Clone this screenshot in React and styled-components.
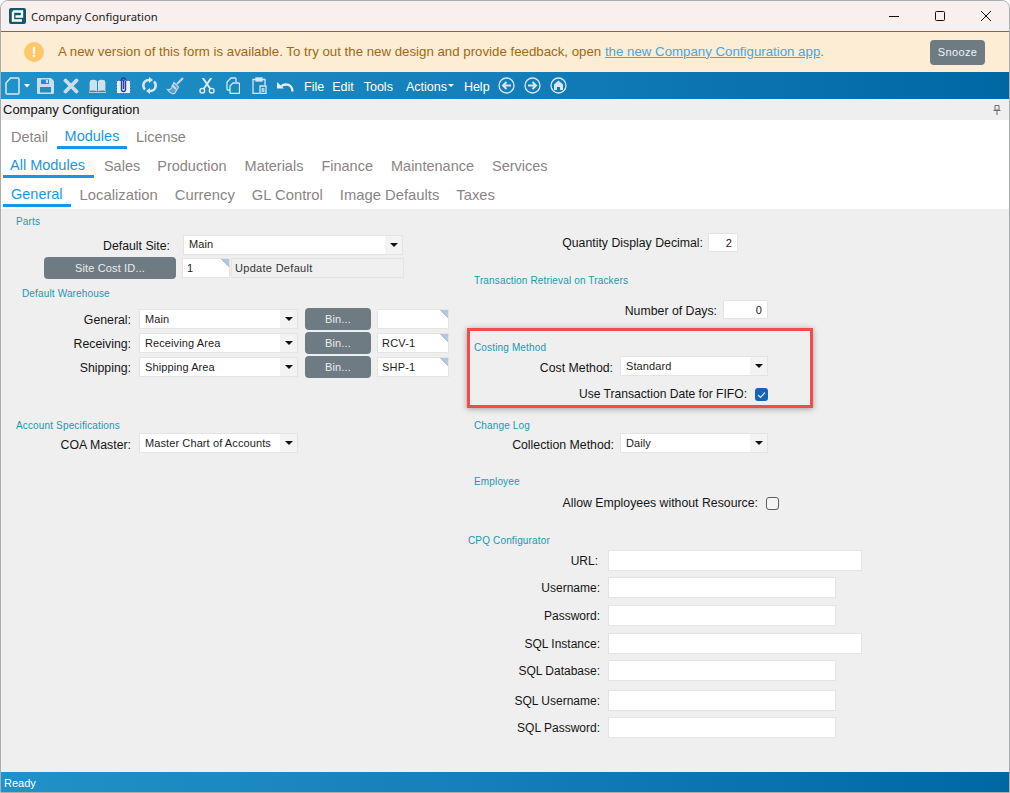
import React from "react";
import styled, { createGlobalStyle } from "styled-components";

const GlobalStyle = createGlobalStyle`
  html, body {
    margin: 0;
    padding: 0;
    background: #ffffff;
  }
  * {
    box-sizing: border-box;
  }
`;

const Window = styled.div`
  width: 1010px;
  height: 793px;
  display: flex;
  flex-direction: column;
  overflow: hidden;
  border: 1px solid #a9aeb1;
  border-radius: 8px 8px 0 0;
  font-family: "Liberation Sans", Arial, sans-serif;
  background: #efefef;
`;

const TitleBar = styled.div`
  height: 31px;
  flex: none;
  display: flex;
  align-items: center;
  padding-left: 8px;
  background: #f8efee;
  border-bottom: 1px solid #2a7fb5;
`;

const TitleText = styled.span`
  margin-left: 5px;
  font-family: "Noto Sans", sans-serif;
  font-size: 11.3px;
  color: #1a1a1a;
`;

const WindowControls = styled.div`
  margin-left: auto;
  display: flex;
  color: #111111;
`;

const WindowControl = styled.div`
  width: 46px;
  height: 30px;
  display: flex;
  align-items: center;
  justify-content: center;
`;

const Banner = styled.div`
  height: 40px;
  flex: none;
  display: flex;
  align-items: center;
  padding: 0 24px 0 23px;
  background: #fcedd4;
`;

const WarnDot = styled.div`
  width: 20px;
  height: 20px;
  border-radius: 50%;
  background: #fdc76a;
  color: #ffffff;
  font-size: 14px;
  font-weight: 700;
  display: flex;
  align-items: center;
  justify-content: center;
`;

const BannerText = styled.div`
  margin-left: 14px;
  padding-bottom: 2px;
  font-size: 13.27px;
  color: #a1690f;
`;

const BannerLink = styled.a`
  color: #4aa5e0;
  text-decoration: underline;
`;

const SnoozeButton = styled.div`
  margin-left: auto;
  width: 55px;
  height: 25px;
  border-radius: 4px;
  background: #6f7b82;
  color: #f0f3f4;
  font-size: 11px;
  letter-spacing: 0.4px;
  display: flex;
  align-items: center;
  justify-content: center;
`;

const Toolbar = styled.div`
  height: 27px;
  flex: none;
  display: flex;
  align-items: center;
  padding-left: 3px;
  color: #d7e7f2;
  background: linear-gradient(90deg, #2092c8 0%, #1580bb 45%, #0067a5 100%);
`;

const ToolSlot = styled.div`
  width: ${(p) => p.$w || 26}px;
  margin-left: ${(p) => p.$ml || 0}px;
  height: 18px;
  flex: none;
  display: flex;
  align-items: center;
  justify-content: center;
`;

const Menu = styled.span`
  margin-left: ${(p) => p.$ml}px;
  padding-top: 2px;
  color: #ffffff;
  font-size: 12.5px;
  display: flex;
  align-items: center;
`;

const Caret = styled.span`
  width: 0;
  height: 0;
  margin-left: 1px;
  margin-bottom: 3px;
  border-left: 3px solid transparent;
  border-right: 3px solid transparent;
  border-top: 3px solid #ffffff;
`;

const HeaderBand = styled.div`
  height: 21px;
  flex: none;
  display: flex;
  align-items: center;
  justify-content: space-between;
  padding: 0 8px 0 2px;
  font-size: 13px;
  color: #111111;
  background: #efefef;
`;

const TabsPanel = styled.div`
  flex: none;
  height: 89px;
  background: #ffffff;
`;

const TabRow = styled.div`
  display: flex;
  height: 29px;
  padding-left: ${(p) => p.$pl || 2}px;
  gap: ${(p) => p.$gap || 0}px;
`;

const Tab = styled.div`
  height: 29px;
  padding: ${(p) => (p.$active ? 6 : 8)}px ${(p) => p.$pr || 8}px 0 ${(p) => p.$pl || 8}px;
  font-size: ${(p) => p.$size || 14.5}px;
  line-height: ${(p) => (p.$active ? 20 : 18)}px;
  white-space: nowrap;
  color: ${(p) => (p.$active ? "#1a96e8" : "#8a8583")};
  border-bottom: 3px solid ${(p) => (p.$active ? "#1a96e8" : "transparent")};
`;

const FormArea = styled.div`
  flex: 1;
  display: flex;
  background: #efefef;
`;

const LeftColumn = styled.div`
  width: 459px;
  flex: none;
`;

const RightColumn = styled.div`
  flex: 1;
`;

const Caption = styled.div`
  height: 12px;
  line-height: 14px;
  margin-top: ${(p) => p.$top}px;
  margin-left: ${(p) => p.$left}px;
  font-size: 10px;
  letter-spacing: 0.15px;
  color: #1b97b4;
  white-space: nowrap;
`;

const Row = styled.div`
  display: flex;
  align-items: center;
  height: ${(p) => p.$h || 20}px;
  margin-top: ${(p) => p.$top}px;
`;

const Label = styled.div`
  width: ${(p) => p.$w}px;
  margin-right: ${(p) => p.$gap}px;
  padding: ${(p) => p.$pt ?? 1}px 0 ${(p) => p.$pb || 0}px;
  flex: none;
  text-align: right;
  font-size: ${(p) => p.$size || 12.3}px;
  color: #151515;
  white-space: nowrap;
`;

const SelectBox = styled.div`
  width: ${(p) => p.$w}px;
  height: 20px;
  flex: none;
  display: flex;
  background: #ffffff;
  border: 1px solid #e4e4e4;
`;

const SelectValue = styled.div`
  flex: 1;
  padding-left: 5px;
  font-size: 11px;
  letter-spacing: 0.1px;
  line-height: ${(p) => p.$lh || 19}px;
  color: #1c1c1c;
  white-space: nowrap;
`;

const SelectArrow = styled.div`
  width: 17px;
  display: flex;
  align-items: center;
  justify-content: center;
  background: #f3f3f3;
  &::before {
    content: "";
    width: 0;
    height: 0;
    border-left: 4px solid transparent;
    border-right: 4px solid transparent;
    border-top: 4px solid #111111;
  }
`;

const GreyButton = styled.div`
  width: ${(p) => p.$w}px;
  height: 22px;
  margin-left: ${(p) => p.$ml || 0}px;
  flex: none;
  border-radius: 4px;
  background: #6f7b82;
  color: #e9edef;
  font-size: 11px;
  letter-spacing: 0.15px;
  display: flex;
  align-items: center;
  justify-content: center;
`;

const TextBox = styled.div`
  width: ${(p) => p.$w}px;
  height: ${(p) => p.$h || 20}px;
  margin-left: ${(p) => p.$ml || 0}px;
  flex: none;
  padding: 0 5px 0 4px;
  font-size: 11px;
  letter-spacing: 0.2px;
  line-height: ${(p) => (p.$h || 20) - 1}px;
  text-align: ${(p) => (p.$num ? "right" : "left")};
  color: #1c1c1c;
  background: ${(p) =>
    p.$fold
      ? "linear-gradient(225deg, #b3c6e0 6px, transparent 6px), #ffffff"
      : "#ffffff"};
  border: 1px solid #e4e4e4;
`;

const ReadOnlyBox = styled.div`
  width: 173px;
  height: 20px;
  flex: none;
  margin-left: 1px;
  padding-left: 3px;
  font-size: 11px;
  letter-spacing: 0.3px;
  line-height: 18px;
  color: #333333;
  background: #f0f0f0;
  border: 1px solid #e4e4e4;
`;

const CheckOn = styled.div`
  width: 13px;
  height: 13px;
  flex: none;
  border-radius: 3px;
  background: #1464b4;
  display: flex;
  align-items: center;
  justify-content: center;
`;

const CheckOff = styled.div`
  width: 13px;
  height: 13px;
  flex: none;
  border-radius: 3px;
  border: 1px solid #5f5f5f;
  background: #f5f5f5;
`;

const Highlight = styled.div`
  width: 346px;
  height: 80px;
  margin: 9px 0 0 7px;
  padding: 0 0 0 4px;
  border: 3px solid #f44a4a;
  box-shadow: 0 1px 6px rgba(0, 0, 0, 0.35);
`;

const StatusBar = styled.div`
  height: 20px;
  flex: none;
  display: flex;
  align-items: center;
  padding: 2px 0 0 3px;
  font-size: 11px;
  color: #ffffff;
  background: linear-gradient(90deg, #2092c8 0%, #1580bb 45%, #0067a5 100%);
`;

const Logo = () => (
  <svg width="17" height="16" viewBox="0 0 17 16">
    <rect x="0" y="0" width="17" height="16" rx="2" fill="#10586c" />
    <path d="M4 3.5h9v5H6.5M4 3.5v9h9" fill="none" stroke="#ffffff" strokeWidth="2.4" />
  </svg>
);

const NewIcon = () => (
  <svg width="15" height="18" viewBox="0 0 15 18" fill="none" stroke="currentColor" strokeWidth="1.5">
    <path d="M5.5 1H13a1 1 0 0 1 1 1v14a1 1 0 0 1-1 1H2a1 1 0 0 1-1-1V6z" />
  </svg>
);

const SmallCaret = () => (
  <svg width="6" height="4" viewBox="0 0 6 4">
    <path d="M0 0h6L3 3.5z" fill="#ffffff" />
  </svg>
);

const SaveIcon = () => (
  <svg width="17" height="16" viewBox="0 0 17 16">
    <path
      fillRule="evenodd"
      d="M1 0h13l3 3v12a1 1 0 0 1-1 1H1a1 1 0 0 1-1-1V1a1 1 0 0 1 1-1zM4 1.5V6h8V1.5zM3 9v5.5h11V9z"
      fill="#c9deee"
    />
    <rect x="9" y="2" width="2" height="3" fill="#c9deee" />
  </svg>
);

const CloseIcon = () => (
  <svg width="16" height="16" viewBox="0 0 16 16" stroke="#cbdde9" strokeWidth="3.8" strokeLinecap="round">
    <path d="M2.5 2.5l11 11M13.5 2.5l-11 11" />
  </svg>
);

const BookIcon = () => (
  <svg width="17" height="15" viewBox="0 0 17 15">
    <path d="M1 2.5C3.5 1.5 6 1.5 8 3v10.5c-2-1-4.500-1.200-7-.5z" fill="#cfe1ee" />
    <path d="M16 2.500C13.500 1.500 11 1.500 9 3v10.500c2-1 4.500-1.200 7-.5z" fill="#cfe1ee" />
    <path d="M0 4v10.500h17V4" fill="none" stroke="#cfe1ee" strokeWidth=".8" />
  </svg>
);

const AttachIcon = () => (
  <svg width="15" height="17" viewBox="0 0 15 17" fill="none">
    <rect x="0.500" y="3.500" width="14" height="13" fill="#e6f0fb" stroke="#2f62c4" strokeDasharray="2 1" />
    <path
      d="M9.500 4v8.500a2 2 0 0 1-4 0V3a2 2 0 0 1 4 0M7.500 3v9"
      stroke="#2c3f9e"
      strokeWidth="1.400"
    />
  </svg>
);

const RefreshIcon = () => (
  <svg width="17" height="17" viewBox="0 0 17 17" fill="none" stroke="#d7e7f2" strokeWidth="2.600">
    <path d="M8 3C4.500 3 2.300 5.500 2.300 8.500c0 1.800.7 3 1.700 4" />
    <path d="M9 14c3.500 0 5.700-2.500 5.700-5.500 0-1.800-.7-3-1.700-4" />
    <path d="M8 0l4 3-4 3zM9 11l-4 3 4 3z" fill="#d7e7f2" stroke="none" />
  </svg>
);

const BroomIcon = () => (
  <svg width="18" height="18" viewBox="0 0 18 18" fill="none" stroke="#c3d9e8">
    <path d="M17 1l-6 6" strokeWidth="2" />
    <path d="M8 5.500l4.500 4.500-4 6.500c-2 .5-5-1-7-4 2 .5 3.500-.5 4-1.500z" strokeWidth="1.200" fill="#4fa3d1" />
    <path d="M6 8l4 4" strokeWidth="2" />
  </svg>
);

const CutIcon = () => (
  <svg width="16" height="16" viewBox="0 0 17 17" fill="none" stroke="#dfecf5" strokeWidth="1.500">
    <circle cx="3.500" cy="13.500" r="2.500" />
    <circle cx="13.500" cy="13.500" r="2.500" />
    <path d="M5 11.500L13 0M12 11.500L4 0" strokeWidth="2" />
  </svg>
);

const CopyIcon = () => (
  <svg width="14" height="17" viewBox="0 0 14 17" fill="none" stroke="#d7e7f2" strokeWidth="1.300">
    <path d="M4 13H2a1 1 0 0 1-1-1V5l4-4h4a1 1 0 0 1 1 1v3" />
    <path d="M7 6h5.500a1 1 0 0 1 1 1v8.500a1 1 0 0 1-1 1H5a1 1 0 0 1-1-1V9z" />
  </svg>
);

const PasteIcon = () => (
  <svg width="15" height="17" viewBox="0 0 15 17" fill="none" stroke="#d7e7f2" strokeWidth="1.300">
    <path d="M4 2.500H1v14h6M10 2.500h3V8" />
    <rect x="4" y="1" width="6" height="3" fill="#d7e7f2" />
    <path d="M8 9h6v7.500H8zM9.500 12h3M9.500 14h3" />
  </svg>
);

const UndoIcon = () => (
  <svg width="17" height="12" viewBox="0 0 17 12" fill="none">
    <path d="M15.500 11.500c0-4.500-3-7-6.500-7-2 0-3.500.7-4.500 1.700" stroke="#e4eff6" strokeWidth="2.400" />
    <path d="M0 3l7 6.500H0z" fill="#e4eff6" transform="translate(0 -1)" />
  </svg>
);

const NavIcon = ({ kind }) => (
  <svg width="17" height="17" viewBox="0 0 17 17" fill="none" stroke="#d7e7f2">
    <circle cx="8.500" cy="8.500" r="7.500" strokeWidth="1.300" />
    {kind === "back" && <path d="M13 8.500H5M8.500 5l-3.500 3.500L8.500 12" strokeWidth="2" />}
    {kind === "forward" && <path d="M4 8.500h8M8.500 5l3.500 3.500L8.500 12" strokeWidth="2" />}
    {kind === "home" && <path d="M8.500 3.500L13 7.500v5.500H10V10H7v3H4V7.500z" fill="#d7e7f2" stroke="none" />}
  </svg>
);

const PinIcon = () => (
  <svg width="8" height="10" viewBox="0 0 8 10" fill="none" stroke="#6a6a6a">
    <path d="M2 .5h4v4.500H2zM.5 5.500h7M4 5.500V10" />
  </svg>
);

const CheckMark = () => (
  <svg width="9" height="8" viewBox="0 0 9 8" fill="none" stroke="#d9e8f7" strokeWidth="1.200">
    <path d="M1 4l2.500 2.500L8 1.500" />
  </svg>
);

const Select = ({ w, value, lh }) => (
  <SelectBox $w={w}>
    <SelectValue $lh={lh}>{value}</SelectValue>
    <SelectArrow />
  </SelectBox>
);

const WarehouseRow = ({ top, label, value, bin }) => (
  <Row $h={22} $top={top}>
    <Label $w={130} $gap={8}>{label}</Label>
    <Select w={159} value={value} />
    <GreyButton $w={66} $ml={7}>Bin...</GreyButton>
    <TextBox $w={72} $ml={6} $fold>{bin}</TextBox>
  </Row>
);

const CpqRow = ({ top, label, w, end = 140 }) => (
  <Row $h={21} $top={top}>
    <Label $w={end} $gap={148 - end} $size={12}>{label}</Label>
    <TextBox $w={w} $h={21} />
  </Row>
);

const App = () => (
  <>
    <GlobalStyle />
    <Window>
      <TitleBar>
        <Logo />
        <TitleText>Company Configuration</TitleText>
        <WindowControls>
          <WindowControl>
            <svg width="10" height="10" viewBox="0 0 10 10" stroke="currentColor">
              <path d="M0 5.500h10" />
            </svg>
          </WindowControl>
          <WindowControl>
            <svg width="10" height="10" viewBox="0 0 10 10" fill="none" stroke="currentColor">
              <rect x="0.500" y="0.500" width="9" height="9" rx="1" />
            </svg>
          </WindowControl>
          <WindowControl>
            <svg width="10" height="10" viewBox="0 0 10 10" stroke="currentColor">
              <path d="M0 0l10 10M10 0L0 10" />
            </svg>
          </WindowControl>
        </WindowControls>
      </TitleBar>

      <Banner>
        <WarnDot>!</WarnDot>
        <BannerText>
          A new version of this form is available. To try out the new design and provide feedback, open{" "}
          <BannerLink>the new Company Configuration app</BannerLink>.
        </BannerText>
        <SnoozeButton>Snooze</SnoozeButton>
      </Banner>

      <Toolbar>
        <ToolSlot $w={17}><NewIcon /></ToolSlot>
        <ToolSlot $w={6} $ml={3}><SmallCaret /></ToolSlot>
        <ToolSlot $ml={2}><SaveIcon /></ToolSlot>
        <ToolSlot><CloseIcon /></ToolSlot>
        <ToolSlot><BookIcon /></ToolSlot>
        <ToolSlot><AttachIcon /></ToolSlot>
        <ToolSlot><RefreshIcon /></ToolSlot>
        <ToolSlot><BroomIcon /></ToolSlot>
        <ToolSlot $ml={6}><CutIcon /></ToolSlot>
        <ToolSlot><CopyIcon /></ToolSlot>
        <ToolSlot><PasteIcon /></ToolSlot>
        <ToolSlot><UndoIcon /></ToolSlot>
        <Menu $ml={6}>File</Menu>
        <Menu $ml={8}>Edit</Menu>
        <Menu $ml={10}>Tools</Menu>
        <Menu $ml={13}>Actions<Caret /></Menu>
        <Menu $ml={10}>Help</Menu>
        <ToolSlot $ml={4}><NavIcon kind="back" /></ToolSlot>
        <ToolSlot><NavIcon kind="forward" /></ToolSlot>
        <ToolSlot><NavIcon kind="home" /></ToolSlot>
      </Toolbar>

      <HeaderBand>
        <span>Company Configuration</span>
        <PinIcon />
      </HeaderBand>

      <TabsPanel>
        <TabRow $gap={0.5}>
          <Tab>Detail</Tab>
          <Tab $active>Modules</Tab>
          <Tab>License</Tab>
        </TabRow>
        <TabRow $gap={2}>
          <Tab $active $pl={7} $pr={9}>All Modules</Tab>
          <Tab $pr={7}>Sales</Tab>
          <Tab>Production</Tab>
          <Tab>Materials</Tab>
          <Tab>Finance</Tab>
          <Tab>Maintenance</Tab>
          <Tab>Services</Tab>
        </TabRow>
        <TabRow $gap={1}>
          <Tab $active>General</Tab>
          <Tab $size={14.8}>Localization</Tab>
          <Tab $size={14.8}>Currency</Tab>
          <Tab $size={14.8}>GL Control</Tab>
          <Tab $size={14.8}>Image Defaults</Tab>
          <Tab $size={14.8}>Taxes</Tab>
        </TabRow>
      </TabsPanel>

      <FormArea>
        <LeftColumn>
          <Caption $top={6} $left={15}>Parts</Caption>
          <Row $top={8}>
            <Label $w={169} $gap={13}>Default Site:</Label>
            <Select w={220} value="Main" lh={17} />
          </Row>
          <Row $h={22} $top={2}>
            <GreyButton $w={132} $ml={43}>Site Cost ID...</GreyButton>
            <TextBox $w={48} $ml={6} $fold>1</TextBox>
            <ReadOnlyBox>Update Default</ReadOnlyBox>
          </Row>
          <Caption $top={8} $left={21}>Default Warehouse</Caption>
          <WarehouseRow top={9} label="General:" value="Main" bin="" />
          <WarehouseRow top={2} label="Receiving:" value="Receiving Area" bin="RCV-1" />
          <WarehouseRow top={2} label="Shipping:" value="Shipping Area" bin="SHP-1" />
          <Caption $top={41} $left={15}>Account Specifications</Caption>
          <Row $top={2}>
            <Label $w={130} $gap={8} $pt={4}>COA Master:</Label>
            <Select w={159} value="Master Chart of Accounts" />
          </Row>
        </LeftColumn>

        <RightColumn>
          <Row $h={19} $top={24}>
            <Label $w={243} $gap={5}>Quantity Display Decimal:</Label>
            <TextBox $w={30} $h={19} $num>2</TextBox>
          </Row>
          <Caption $top={22} $left={14}>Transaction Retrieval on Trackers</Caption>
          <Row $h={19} $top={14}>
            <Label $w={257} $gap={6} $pt={3}>Number of Days:</Label>
            <TextBox $w={45} $h={19} $num>0</TextBox>
          </Row>
          <Highlight>
            <Caption $top={10} $left={0}>Costing Method</Caption>
            <Row $top={3}>
              <Label $w={139} $gap={7} $pt={3}>Cost Method:</Label>
              <Select w={148} value="Standard" />
            </Row>
            <Row $h={13} $top={12}>
              <Label $w={273} $gap={8} $pt={0} $pb={2} $size={12.1}>Use Transaction Date for FIFO:</Label>
              <CheckOn><CheckMark /></CheckOn>
            </Row>
          </Highlight>
          <Caption $top={11} $left={14}>Change Log</Caption>
          <Row $top={2}>
            <Label $w={154} $gap={6} $pt={4}>Collection Method:</Label>
            <Select w={148} value="Daily" />
          </Row>
          <Caption $top={22} $left={14}>Employee</Caption>
          <Row $h={13} $top={10}>
            <Label $w={298} $gap={8} $pt={0} $pb={2}>Allow Employees without Resource:</Label>
            <CheckOff />
          </Row>
          <Caption $top={24} $left={8}>CPQ Configurator</Caption>
          <CpqRow top={4} label="URL:" w={254} end={138} />
          <CpqRow top={6} label="Username:" w={228} />
          <CpqRow top={7} label="Password:" w={228} />
          <CpqRow top={7} label="SQL Instance:" w={254} />
          <CpqRow top={6} label="SQL Database:" w={228} />
          <CpqRow top={9} label="SQL Username:" w={228} />
          <CpqRow top={6} label="SQL Password:" w={228} />
        </RightColumn>
      </FormArea>

      <StatusBar>Ready</StatusBar>
    </Window>
  </>
);

export default App;
